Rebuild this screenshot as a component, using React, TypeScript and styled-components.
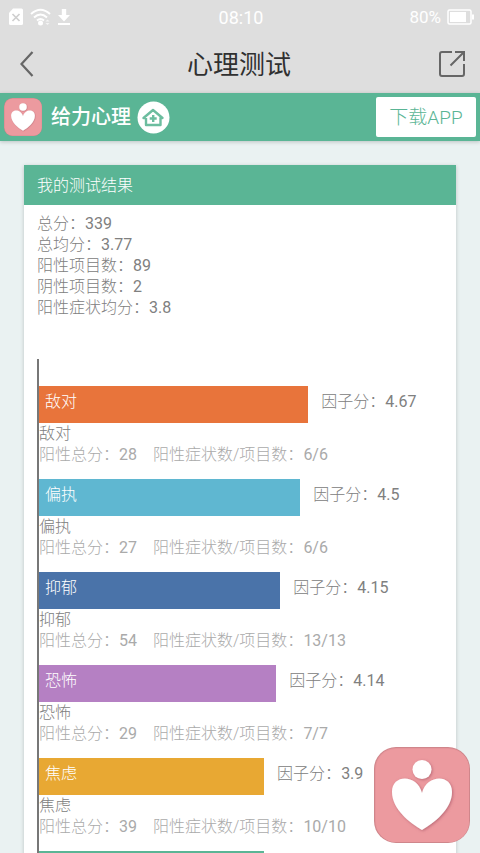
import React from "react";
import styled, { createGlobalStyle } from "styled-components";

const GlobalStyle = createGlobalStyle`
  * { box-sizing: border-box; }
  body {
    margin: 0;
    background: #eaf2f2;
    color: #808080;
    font-family: Roboto, "Noto Sans CJK SC", sans-serif;
    font-size: 16px;
    font-weight: 300;
    line-height: 21px;
  }
  button, a { font: inherit; color: inherit; }
`;

const Screen = styled.div`
  height: 100vh;
  display: flex;
  flex-direction: column;
`;

const StatusBar = styled.div`
  flex: none;
  height: 34px;
  padding: 0 6px 0 8px;
  display: grid;
  grid-template-columns: 1fr auto 1fr;
  align-items: center;
  background: #dedede;
  color: #fff;
  font-size: 18px;
  font-weight: 400;
`;

const StatusGroup = styled.div<{ $end?: boolean }>`
  display: flex;
  align-items: center;
  gap: 6px;
  justify-content: ${(p) => (p.$end ? "flex-end" : "flex-start")};
`;

const Percent = styled.span`
  font-size: 17px;
`;

const TitleBar = styled.header`
  flex: none;
  height: 59px;
  padding: 0 14px;
  display: flex;
  align-items: center;
  justify-content: space-between;
  background: #dedede;
`;

const PageTitle = styled.h1`
  margin: 0;
  padding-top: 2px;
  color: #303030;
  font-size: 26px;
  font-weight: 400;
  line-height: 32px;
`;

const IconButton = styled.button`
  display: flex;
  padding: 0;
  border: 0;
  background: none;
  cursor: pointer;
`;

const BrandBar = styled.div`
  flex: none;
  height: 48px;
  padding: 0 4px;
  display: flex;
  align-items: center;
  background: #5ab595;
  box-shadow: 0 1px 4px rgba(0, 0, 0, 0.2);
  color: #fff;
`;

const BrandName = styled.span`
  margin: 0 6px 0 9px;
  font-size: 20px;
  font-weight: 500;
`;

const DownloadLink = styled.a`
  margin-left: auto;
  width: 100px;
  height: 40px;
  display: flex;
  align-items: center;
  justify-content: center;
  border-radius: 2px;
  background: #fff;
  color: #5ab595;
  font-size: 19px;
  font-weight: 300;
  text-decoration: none;
`;

const Content = styled.main`
  flex: 1;
  min-height: 0;
  overflow-y: auto;
  scrollbar-width: none;
  padding: 24px;
`;

const Card = styled.section`
  background: #fff;
  box-shadow: 0 1px 4px rgba(0, 0, 0, 0.2);
`;

const CardTitle = styled.h2`
  margin: 0;
  padding: 1px 13px 0;
  background: #5ab595;
  color: #fff;
  font-size: 16px;
  font-weight: 300;
  line-height: 39px;
  padding-top: 1px;
`;

const Summary = styled.dl`
  margin: 0;
  padding: 8px 13px 0;
`;

const SummaryRow = styled.div`
  display: flex;
  dt, dd { margin: 0; }
  dd { font-weight: 400; }
`;

const Chart = styled.ul`
  list-style: none;
  margin: 41px 15px 24px 13px;
  padding: 27px 0 0;
  border-left: 2px solid #777;
`;

const Factor = styled.li`
  padding-bottom: 14px;
`;

const BarRow = styled.div`
  display: flex;
  gap: 13px;
  line-height: 32px;
  white-space: nowrap;
`;

const Bar = styled.div<{ $color: string }>`
  flex: none;
  height: 37px;
  padding-left: 6px;
  background: ${(p) => p.$color};
  color: #fff;
`;

const Num = styled.span`
  font-weight: 400;
`;

const Stats = styled.div`
  display: flex;
  gap: 16px;
  color: #aaa;
`;

const FloatingLink = styled.a`
  position: fixed;
  right: 10px;
  bottom: 10px;
  display: flex;
`;

const summary = [
  ["总分", "339"],
  ["总均分", "3.77"],
  ["阳性项目数", "89"],
  ["阴性项目数", "2"],
  ["阳性症状均分", "3.8"],
];

const factors = [
  { name: "敌对", score: "4.67", total: "28", ratio: "6/6", width: 67, color: "#e8743b" },
  { name: "偏执", score: "4.5", total: "27", ratio: "6/6", width: 65, color: "#5fb7d1" },
  { name: "抑郁", score: "4.15", total: "54", ratio: "13/13", width: 60, color: "#4a73a9" },
  { name: "恐怖", score: "4.14", total: "29", ratio: "7/7", width: 59, color: "#b580c3" },
  { name: "焦虑", score: "3.9", total: "39", ratio: "10/10", width: 56, color: "#e8a833" },
];

function AppLogo({ size, id }: { size: number; id: string }) {
  return (
    <svg width={size} height={size} viewBox="0 0 96 96" aria-hidden="true">
      <defs>
        <filter id={id} x="-20%" y="-20%" width="140%" height="140%">
          <feDropShadow dx="1" dy="1" stdDeviation="1.5" floodColor="#a05060" floodOpacity="0.65" />
        </filter>
      </defs>
      <rect width="96" height="96" rx="22" fill="#cf868b" />
      <rect x="1" y="1" width="94" height="94" rx="21" fill="#e6949a" />
      <rect x="2" y="2" width="93" height="93" rx="20" fill="#ec9a9f" />
      <g fill="#fff" filter={`url(#${id})`}>
        <circle cx="48" cy="22.5" r="9.5" />
        <path d="M48 83C36 76 18 62 18 45C18 27 43 27 48 46C53 27 78 27 78 45C78 62 60 76 48 83Z" />
      </g>
    </svg>
  );
}

function SimIcon() {
  return (
    <svg width="16" height="18" viewBox="0 0 16 18" aria-hidden="true">
      <path d="M5 0.5H13.5Q15 0.5 15 2V15.5Q15 17 13.5 17H2.5Q1 17 1 15.5V5Z" fill="#fff" />
      <path d="M4.5 6L11.5 13M11.5 6L4.5 13" stroke="#cfcfcf" strokeWidth="1.7" />
    </svg>
  );
}

function WifiIcon() {
  return (
    <svg width="21" height="18" viewBox="0 0 21 18" aria-hidden="true">
      <g fill="none" stroke="#fff" strokeWidth="2">
        <path d="M1 6Q10.5 -2.5 20 6" />
        <path d="M4 9.5Q10.5 3.5 17 9.5" />
        <path d="M7 12.5Q10.5 9.5 14 12.5" />
      </g>
      <circle cx="10.5" cy="15" r="2.5" fill="#fff" />
      <path d="M15.5 13.5L17.5 11.5L19.5 13.5ZM15.5 15L17.5 17L19.5 15Z" fill="#f4f4f4" />
    </svg>
  );
}

function DownloadIcon() {
  return (
    <svg width="14" height="18" viewBox="0 0 14 18" aria-hidden="true">
      <path d="M4.8 1H9.2V7H13L7 13.5L1 7H4.8ZM1 15H13V17H1Z" fill="#fff" />
    </svg>
  );
}

function BatteryIcon() {
  return (
    <svg width="27" height="16" viewBox="0 0 27 16" aria-hidden="true">
      <rect x="1" y="1" width="23" height="14" rx="1.5" fill="none" stroke="#fff" strokeWidth="1.5" />
      <rect x="3" y="3" width="16" height="10" fill="#fff" />
      <path d="M25 5.5H27V10.5H25Z" fill="#fff" />
    </svg>
  );
}

function HomeBadge() {
  return (
    <svg width="33" height="33" viewBox="0 0 33 33" aria-hidden="true">
      <circle cx="16.5" cy="16.5" r="16" fill="#fff" />
      <g fill="none" stroke="#6cbd9f" strokeLinejoin="round">
        <path d="M8.5 17H6.500L16 9L25.500 17H23.500V24H9V17" strokeWidth="2.4" />
        <path d="M16.200 14V21M12.700 17.500H19.700" strokeWidth="2.4" />
      </g>
    </svg>
  );
}

export default function App() {
  return (
    <Screen>
      <GlobalStyle />
      <StatusBar>
        <StatusGroup>
          <SimIcon />
          <WifiIcon />
          <DownloadIcon />
        </StatusGroup>
        <span>08:10</span>
        <StatusGroup $end>
          <Percent>80%</Percent>
          <BatteryIcon />
        </StatusGroup>
      </StatusBar>
      <TitleBar>
        <IconButton aria-label="返回">
          <svg width="26" height="28" viewBox="0 0 26 28" fill="none" stroke="#666" strokeWidth="2.2">
            <path d="M18.5 2L7.500 14L18.500 26" />
          </svg>
        </IconButton>
        <PageTitle>心理测试</PageTitle>
        <IconButton aria-label="分享">
          <svg width="28" height="28" viewBox="0 0 28 28" fill="none" stroke="#666" strokeWidth="2">
            <path d="M14 2H4Q2 2 2 4V24Q2 26 4 26H24Q26 26 26 24V14" />
            <path d="M17 2H26V11M26 2L12.5 15.5" />
          </svg>
        </IconButton>
      </TitleBar>
      <BrandBar>
        <AppLogo size={38} id="brand-shadow" />
        <BrandName>给力心理</BrandName>
        <HomeBadge />
        <DownloadLink href="#download">下载APP</DownloadLink>
      </BrandBar>
      <Content>
        <Card>
          <CardTitle>我的测试结果</CardTitle>
          <Summary>
            {summary.map(([label, value]) => (
              <SummaryRow key={label}>
                <dt>{label}：</dt>
                <dd>{value}</dd>
              </SummaryRow>
            ))}
          </Summary>
          <Chart>
            {factors.map((f) => (
              <Factor key={f.name}>
                <BarRow>
                  <Bar $color={f.color} style={{ width: `${f.width}%` }}>{f.name}</Bar>
                  <span>因子分：<Num>{f.score}</Num></span>
                </BarRow>
                <div>{f.name}</div>
                <Stats>
                  <span>阳性总分：<Num>{f.total}</Num></span>
                  <span>阳性症状数/项目数：<Num>{f.ratio}</Num></span>
                </Stats>
              </Factor>
            ))}
            <Factor>
              <Bar $color="#5ab595" style={{ width: "56%" }} />
            </Factor>
          </Chart>
        </Card>
      </Content>
      <FloatingLink href="#home" aria-label="给力心理">
        <AppLogo size={96} id="float-shadow" />
      </FloatingLink>
    </Screen>
  );
}
